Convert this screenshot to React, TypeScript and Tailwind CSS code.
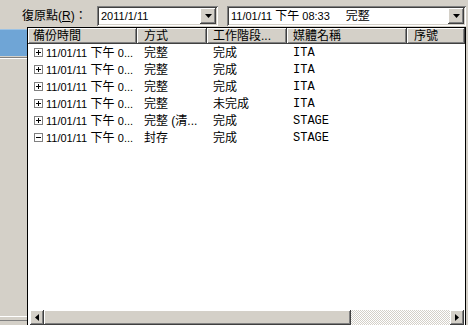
import React from 'react'

const raised =
  'shadow-[inset_-1px_-1px_#404040,inset_1px_1px_#ffffff,inset_-2px_-2px_#808080,inset_2px_2px_#d4d0c8]'
const sunken =
  'shadow-[inset_1px_1px_#808080,inset_-1px_-1px_#ffffff,inset_2px_2px_#404040,inset_-2px_-2px_#d4d0c8]'

const cjk = "font-['Liberation_Sans','Noto_Sans_CJK_TC',sans-serif]"

const columns = [
  { label: '備份時間', w: 'w-[109px]', pad: 'pl-[5px]' },
  { label: '方式', w: 'w-[70px]', pad: 'pl-[7px]' },
  { label: '工作階段...', w: 'w-[80px]', pad: 'pl-[6px]' },
  { label: '媒體名稱', w: 'w-[120px]', pad: 'pl-[6px]' },
  { label: '序號', w: 'w-[58px]', pad: 'pl-[7px]' },
]

const rows = [
  { mode: '完整', stage: '完成', media: 'ITA', open: false },
  { mode: '完整', stage: '完成', media: 'ITA', open: false },
  { mode: '完整', stage: '完成', media: 'ITA', open: false },
  { mode: '完整', stage: '未完成', media: 'ITA', open: false },
  { mode: '完整 (清...', stage: '完成', media: 'STAGE', open: false },
  { mode: '封存', stage: '完成', media: 'STAGE', open: true },
]

function DownArrow() {
  return (
    <svg width="7" height="4" viewBox="0 0 7 4">
      <path d="M0 0h7L3.5 4z" fill="#000" />
    </svg>
  )
}

function Combo({ width, children }: { width: string; children: React.ReactNode }) {
  return (
    <div className={`${width} h-[20px] bg-white ${sunken} flex items-center p-[2px]`}>
      <div className="flex-1 pl-[2px] text-[11px] leading-none text-black whitespace-nowrap overflow-hidden">
        {children}
      </div>
      <div className={`w-[16px] h-[16px] bg-[#d4d0c8] ${raised} flex items-center justify-center`}>
        <DownArrow />
      </div>
    </div>
  )
}

function TreeBox({ open }: { open: boolean }) {
  return (
    <span className="w-[9px] h-[9px] border border-[#808080] bg-white relative shrink-0">
      <span className="absolute left-[1px] top-[3px] w-[5px] h-[1px] bg-black" />
      {!open && <span className="absolute left-[3px] top-[1px] w-[1px] h-[5px] bg-black" />}
    </span>
  )
}

export default function App() {
  return (
    <div className={`w-[468px] h-[325px] bg-[#d4d0c8] overflow-hidden flex flex-col ${cjk} text-black`}>
      {/* top bar */}
      <div className="h-[27px] flex items-start pt-[6px] shrink-0">
        <div className="ml-[22px] w-[75px] h-[20px] flex items-center text-[12px]">
          復原點(<span className="underline">R</span>)：
        </div>
        <Combo width="w-[121px]">2011/1/11</Combo>
        <div className="ml-[9px]">
          <Combo width="w-[239px]">
            11/01/11 <span className="text-[12px]">下午</span> 08:33
            <span className="ml-[16px] text-[12px]">完整</span>
          </Combo>
        </div>
      </div>

      <div className="flex flex-1 min-h-0">
        {/* left strip behind popup */}
        <div className="w-[27px] flex flex-col">
          <div className="h-[2px]" />
          <div className="h-[27px] bg-[#6fa5d6] border-t border-[#9cc2e4]" />
          <div className="h-[1px] mt-[1px] bg-[#808080]" />
          <div className="h-[1px] bg-white" />
          <div className="flex-1" />
          <div className="h-[1px] bg-white" />
          <div className="h-[3px]" />
          <div className="h-[1px] bg-[#808080]" />
          <div className="h-[4px]" />
        </div>

        {/* dropdown list */}
        <div className="w-[439px] border border-b-0 border-black bg-white flex flex-col">
          <div className="flex h-[16px] shrink-0">
            {columns.map((c) => (
              <div
                key={c.label}
                className={`${c.w} ${c.pad} h-[16px] bg-[#d4d0c8] shadow-[inset_-1px_-1px_#404040,inset_1px_1px_#ffffff,inset_-2px_-2px_#808080] text-[12px] leading-[16px] whitespace-nowrap overflow-hidden`}
              >
                {c.label}
              </div>
            ))}
          </div>

          <div className="flex-1">
            {rows.map((r, i) => (
              <div key={i} className="flex h-[17px] items-center text-[12px] whitespace-nowrap">
                <div className="w-[109px] flex items-center pl-[6px] gap-[3px]">
                  <TreeBox open={r.open} />
                  <span>
                    <span className="text-[11px]">11/01/11</span> 下午 <span className="text-[11px]">0...</span>
                  </span>
                </div>
                <div className="w-[70px] pl-[7px]">{r.mode}</div>
                <div className="w-[80px] pl-[6px]">{r.stage}</div>
                <div className="w-[120px] pl-[6px] font-['Liberation_Mono',monospace] text-[12px]">
                  {r.media}
                </div>
                <div className="w-[58px]" />
              </div>
            ))}
          </div>

          {/* horizontal scrollbar */}
          <div className="h-[15px] ml-[2px] mr-[1px] flex shrink-0">
            <div className={`w-[14px] h-[15px] bg-[#d4d0c8] ${raised} flex items-center justify-center`}>
              <svg width="4" height="7" viewBox="0 0 4 7">
                <path d="M4 0v7L0 3.5z" fill="#000" />
              </svg>
            </div>
            <div className={`w-[307px] h-[15px] bg-[#d4d0c8] ${raised}`} />
            <div className="flex-1 h-[15px] bg-[repeating-conic-gradient(#d4d0c8_0%_25%,#ffffff_0%_50%)] bg-[length:2px_2px]" />
            <div className={`w-[14px] h-[15px] bg-[#d4d0c8] ${raised} flex items-center justify-center`}>
              <svg width="4" height="7" viewBox="0 0 4 7">
                <path d="M0 0v7L4 3.5z" fill="#000" />
              </svg>
            </div>
          </div>
        </div>

        <div className="w-[2px]" />
      </div>
    </div>
  )
}
